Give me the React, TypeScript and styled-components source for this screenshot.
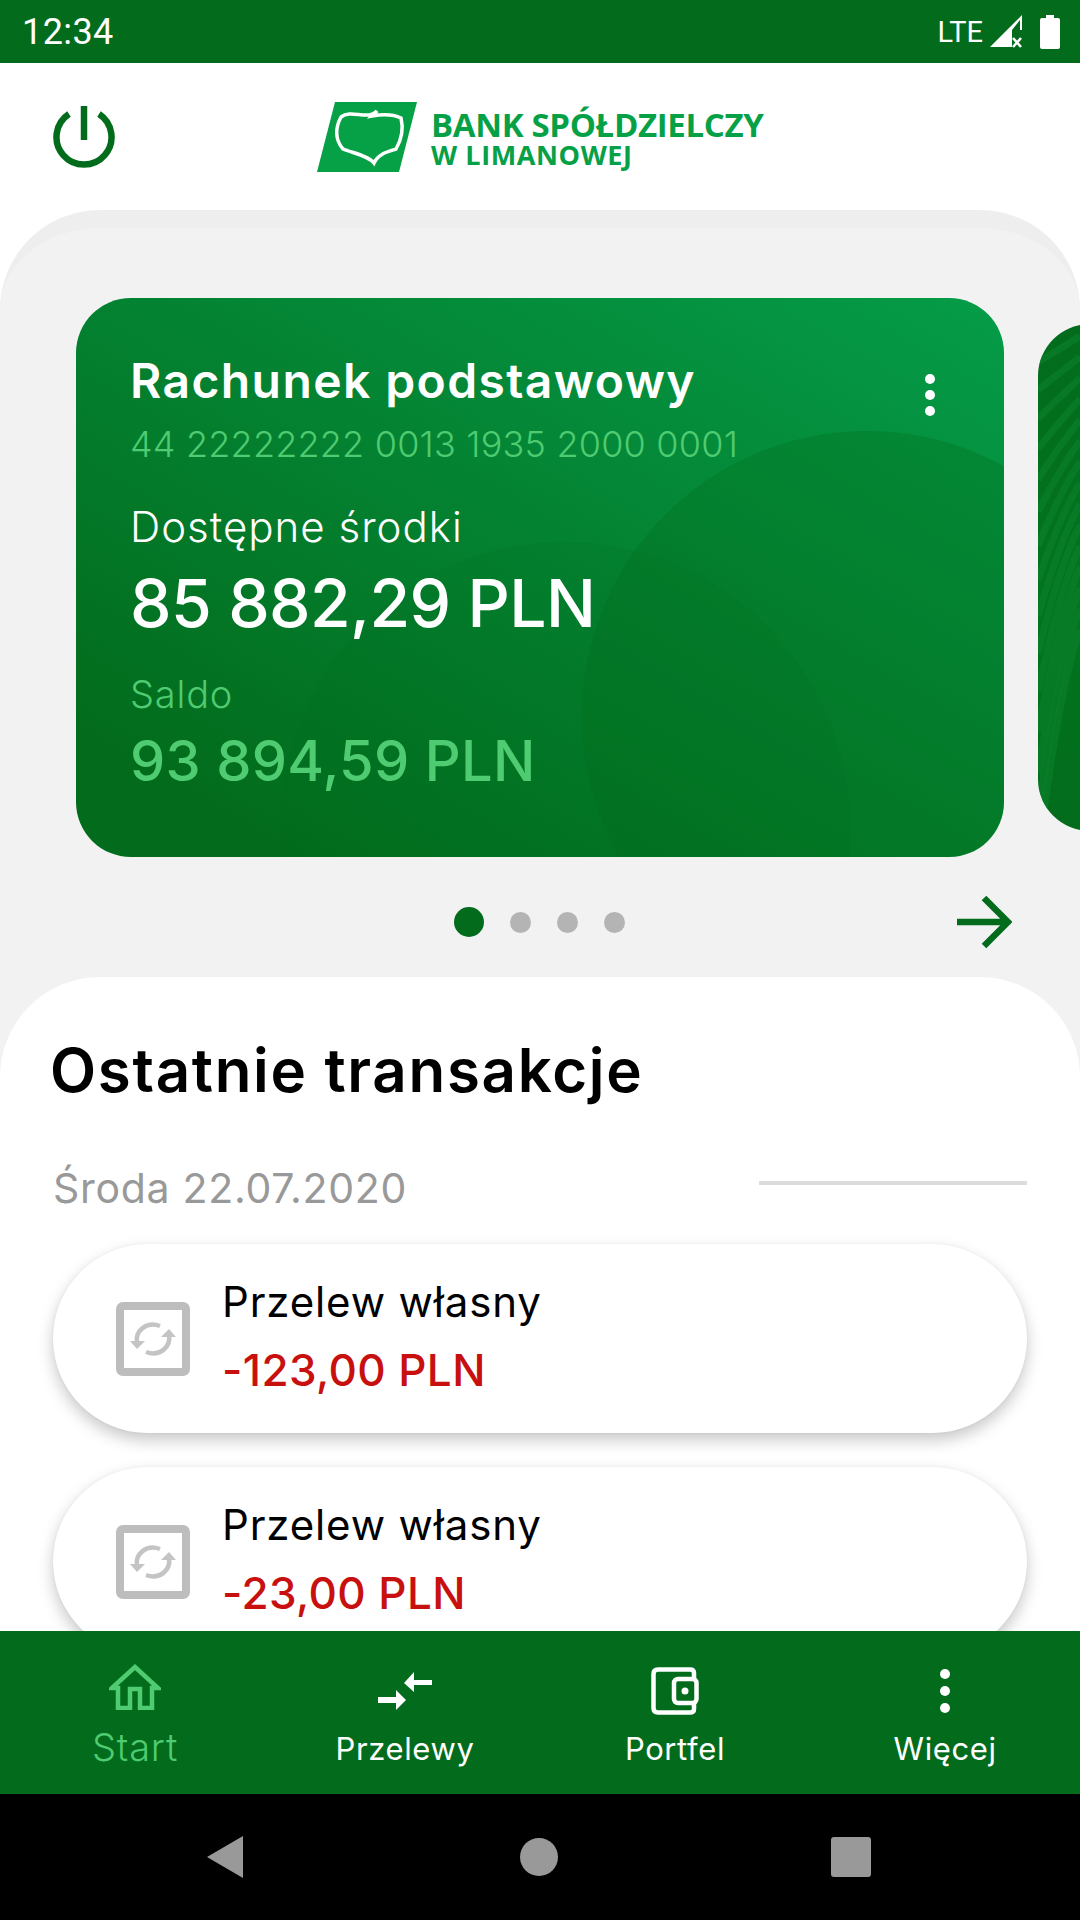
import React from "react";
import styled, { createGlobalStyle } from "styled-components";

const GlobalStyle = createGlobalStyle`
  html, body { margin: 0; padding: 0; background: #000; }
  * { box-sizing: border-box; }
`;

const GREEN = "#026c1c";
const LIGHT = "#4fcb71";
const FONT = `"Inter", "Noto Sans", sans-serif`;

const transactions = [
  { id: 1, title: "Przelew własny", amount: "-123,00 PLN" },
  { id: 2, title: "Przelew własny", amount: "-23,00 PLN" },
];

const PowerIcon = () => (
  <svg width="62" height="62" viewBox="0 0 62 62" fill="none" stroke={GREEN} strokeWidth="6.5">
    <path d="M16 8 A27.5 27.5 0 1 0 46 8" />
    <path d="M31 0 V34" />
  </svg>
);

const BankLogo = () => (
  <svg width="100" height="70" viewBox="0 0 100 70">
    <path d="M18 0 H100 L82 70 H0 Z" fill="#06a146" />
    <path
      d="M24 15 C32 9 42 14 52 13 C56 13 58 11 60 9 C58 12 56 13 55 14 C66 12 76 12 84 16 C87 28 83 40 79 47 C70 50 61 52 57 61 C52 54 36 51 26 47 C18 38 18 26 24 15 Z"
      fill="none"
      stroke="#fff"
      strokeWidth="3.5"
    />
  </svg>
);

const SignalIcon = () => (
  <svg width="36" height="36" viewBox="0 0 36 36">
    <path d="M1 33 L33 1 V16 H23 V33 Z" fill="#fff" />
    <path d="M23 16 L31 6 V16 Z" fill={GREEN} />
    <path d="M24 24 L32 33 M32 24 L24 33" stroke="#fff" strokeWidth="2.6" />
  </svg>
);

const BatteryIcon = () => (
  <svg width="20" height="34" viewBox="0 0 20 34">
    <path d="M6 0 H14 V3 H18 Q20 3 20 5 V32 Q20 34 18 34 H2 Q0 34 0 32 V5 Q0 3 2 3 H6 Z" fill="#fff" />
  </svg>
);

const TransferTypeIcon = () => (
  <svg width="74" height="74" viewBox="0 0 74 74" fill="none">
    <rect x="4" y="4" width="66" height="66" rx="3" stroke="#bdbdbd" strokeWidth="8" />
    <path d="M21 41 C19 29 30 19 44 24" stroke="#c4c4c4" strokeWidth="4.5" />
    <path d="M53 33 C55 45 44 55 30 50" stroke="#c4c4c4" strokeWidth="4.5" />
    <path d="M14 39 H29 L21 47 Z M60 35 H45 L53 27 Z" fill="#c4c4c4" />
  </svg>
);

const HomeIcon = () => (
  <svg width="52" height="46" viewBox="0 0 52 46" fill="none" stroke={LIGHT} strokeWidth="4.5">
    <path d="M3 24 L26 3 L49 24 H43 V44 H31 V25 H21 V44 H9 V24 Z" />
  </svg>
);

const TransfersIcon = () => (
  <svg width="54" height="38" viewBox="0 0 54 38" fill="#fff">
    <path d="M54 13 H36 V20 L26 11 L36 0 V8 H54 Z" />
    <path d="M0 25 H18 V18 L28 28 L18 38 V31 H0 Z" />
  </svg>
);

const WalletIcon = () => (
  <svg width="48" height="48" viewBox="0 0 48 48" fill="none" stroke="#fff" strokeWidth="4.5">
    <path d="M43 12 V6 Q43 2.5 39 2.5 H7 Q2.5 2.5 2.5 7 V41 Q2.5 45.5 7 45.5 H39 Q43 45.5 43 42 V36" />
    <rect x="23" y="12" width="22.5" height="24" rx="4" />
    <circle cx="34" cy="24" r="3.5" fill="#fff" stroke="none" />
  </svg>
);

const DotsIcon = ({ size = 10, gap = 7 }: { size?: number; gap?: number }) => (
  <DotsColumn $gap={gap}>
    <Dot $size={size} />
    <Dot $size={size} />
    <Dot $size={size} />
  </DotsColumn>
);

const stripes = Array.from({ length: 15 }, (_, i) => i);

const StripePattern = () => (
  <svg width="42" height="507" viewBox="0 0 42 507" fill="none" stroke="#0b7f2b" strokeWidth="7" strokeOpacity="0.65">
    {stripes.map((i) => (
      <path key={i} d={`M0 ${38 + i * 27 + i * i * 0.6} Q21 ${26 + i * 24} 42 ${12 + i * 21}`} />
    ))}
  </svg>
);

export default function App() {
  return (
    <>
      <GlobalStyle />
      <Screen>
        <StatusBar>
          <Clock>12:34</Clock>
          <StatusIcons>
            <Lte>LTE</Lte>
            <SignalIcon />
            <BatteryIcon />
          </StatusIcons>
        </StatusBar>

        <Header>
          <PowerButton>
            <PowerIcon />
          </PowerButton>
          <Logo>
            <BankLogo />
            <LogoText>
              <LogoName>BANK SPÓŁDZIELCZY</LogoName>
              <LogoPlace>W LIMANOWEJ</LogoPlace>
            </LogoText>
          </Logo>
        </Header>

        <Main>
          <AccountsPanel>
            <Carousel>
              <AccountCard>
                <CircleTop />
                <CircleBottom />
                <CardMenu>
                  <DotsIcon size={10} gap={6} />
                </CardMenu>
                <AccountName>Rachunek podstawowy</AccountName>
                <AccountNumber>44 22222222 0013 1935 2000 0001</AccountNumber>
                <AvailableLabel>Dostępne środki</AvailableLabel>
                <AvailableValue>85 882,29 PLN</AvailableValue>
                <BalanceLabel>Saldo</BalanceLabel>
                <BalanceValue>93 894,59 PLN</BalanceValue>
              </AccountCard>
              <NextCard>
                <StripePattern />
              </NextCard>
            </Carousel>
            <Pager>
              <PagerDots>
                <PagerDot $active />
                <PagerDot />
                <PagerDot />
                <PagerDot />
              </PagerDots>
              <PagerArrow>
                <svg width="58" height="54" viewBox="0 0 58 54" fill="none" stroke={GREEN} strokeWidth="6.5">
                  <path d="M3 27 H54 M30 3 L54 27 L30 51" />
                </svg>
              </PagerArrow>
            </Pager>
          </AccountsPanel>

          <TransactionsPanel>
            <SectionTitle>Ostatnie transakcje</SectionTitle>
            <DateRow>
              <DateLabel>Środa 22.07.2020</DateLabel>
              <DateLine />
            </DateRow>
            <TransactionList>
              {transactions.map((t) => (
                <TransactionCard key={t.id}>
                  <TransferTypeIcon />
                  <TransactionBody>
                    <TransactionTitle>{t.title}</TransactionTitle>
                    <TransactionAmount>{t.amount}</TransactionAmount>
                  </TransactionBody>
                </TransactionCard>
              ))}
            </TransactionList>
          </TransactionsPanel>
        </Main>

        <BottomNav>
          <NavItem $active>
            <NavIcon><HomeIcon /></NavIcon>
            <NavLabel $active>Start</NavLabel>
          </NavItem>
          <NavItem>
            <NavIcon><TransfersIcon /></NavIcon>
            <NavLabel>Przelewy</NavLabel>
          </NavItem>
          <NavItem>
            <NavIcon><WalletIcon /></NavIcon>
            <NavLabel>Portfel</NavLabel>
          </NavItem>
          <NavItem>
            <NavIcon><DotsIcon size={10} gap={7} /></NavIcon>
            <NavLabel>Więcej</NavLabel>
          </NavItem>
        </BottomNav>

        <SystemBar>
          <BackButton />
          <HomeButton />
          <RecentButton />
        </SystemBar>
      </Screen>
    </>
  );
}

const Screen = styled.div`
  width: 1080px;
  height: 1920px;
  display: flex;
  flex-direction: column;
  overflow: hidden;
  background: #fff;
  font-family: ${FONT};
`;

const StatusBar = styled.div`
  flex: 0 0 63px;
  background: ${GREEN};
  display: flex;
  align-items: center;
  justify-content: space-between;
  padding: 0 20px 0 22px;
  color: #fff;
  font-family: "Roboto", sans-serif;
`;

const Clock = styled.span`
  font-size: 36px;
  letter-spacing: 0.4px;
`;

const StatusIcons = styled.div`
  display: flex;
  align-items: center;
  gap: 6px;

  svg:last-child {
    margin-left: 9px;
  }
`;

const Lte = styled.span`
  font-size: 29px;
`;

const Header = styled.div`
  flex: 0 0 147px;
  display: flex;
  align-items: center;
  padding-left: 53px;
`;

const PowerButton = styled.div`
  display: flex;
  margin-right: 202px;
`;

const Logo = styled.div`
  display: flex;
  align-items: center;
  gap: 14px;
`;

const LogoText = styled.div`
  display: flex;
  flex-direction: column;
  padding-top: 4px;
  color: #06a146;
  font-family: "Open Sans", sans-serif;
  font-weight: 700;
`;

const LogoName = styled.span`
  font-size: 33px;
  line-height: 33px;
  letter-spacing: -0.35px;
`;

const LogoPlace = styled.span`
  font-size: 27px;
  line-height: 28px;
  letter-spacing: 0.6px;
`;

const Main = styled.div`
  flex: 1;
  min-height: 0;
  overflow: hidden;
  display: flex;
  flex-direction: column;
`;

const AccountsPanel = styled.div`
  background: #f2f2f2;
  border-top: 18px solid #eeeeee;
  border-radius: 100px 100px 0 0;
  padding: 70px 0 128px;
  margin-bottom: -100px;
`;

const Carousel = styled.div`
  display: flex;
  align-items: center;
  gap: 34px;
  padding-left: 76px;
  overflow: hidden;
`;

const AccountCard = styled.div`
  position: relative;
  flex: 0 0 928px;
  height: 559px;
  padding: 55px 54px;
  overflow: hidden;
  border-radius: 55px;
  background: linear-gradient(210deg, #059c48 0%, #048a39 32%, #026c1c 88%);
  color: #fff;
`;

const CircleTop = styled.div`
  position: absolute;
  left: 506px;
  top: 133px;
  width: 570px;
  height: 570px;
  border-radius: 50%;
  background: rgba(2, 108, 28, 0.3);
`;

const CircleBottom = styled.div`
  position: absolute;
  left: 204px;
  top: 244px;
  width: 570px;
  height: 570px;
  border-radius: 50%;
  background: rgba(2, 108, 28, 0.14);
`;

const CardMenu = styled.div`
  position: absolute;
  top: 76px;
  right: 69px;
`;

const DotsColumn = styled.div<{ $gap: number }>`
  display: flex;
  flex-direction: column;
  gap: ${(p) => p.$gap}px;
`;

const Dot = styled.span<{ $size: number }>`
  display: block;
  width: ${(p) => p.$size}px;
  height: ${(p) => p.$size}px;
  border-radius: 50%;
  background: #fff;
`;

const CardText = styled.div`
  position: relative;
  white-space: nowrap;
`;

const AccountName = styled(CardText)`
  font-size: 48px;
  font-weight: 600;
  line-height: 56px;
  letter-spacing: 1.4px;
`;

const AccountNumber = styled(CardText)`
  margin-top: 13px;
  font-size: 36px;
  font-weight: 300;
  line-height: 44px;
  letter-spacing: 0.2px;
  color: ${LIGHT};
`;

const AvailableLabel = styled(CardText)`
  margin-top: 36px;
  font-size: 42px;
  font-weight: 300;
  line-height: 50px;
  letter-spacing: 1px;
`;

const AvailableValue = styled(CardText)`
  margin-top: 13px;
  font-size: 66px;
  font-weight: 500;
  line-height: 76px;
  letter-spacing: -0.6px;
`;

const BalanceLabel = styled(CardText)`
  margin-top: 31px;
  font-size: 38px;
  font-weight: 300;
  line-height: 44px;
  letter-spacing: 0.8px;
  color: ${LIGHT};
`;

const BalanceValue = styled(CardText)`
  margin-top: 12px;
  font-size: 56px;
  font-weight: 500;
  line-height: 66px;
  letter-spacing: 0.3px;
  color: ${LIGHT};
`;

const NextCard = styled.div`
  flex: 0 0 928px;
  height: 507px;
  overflow: hidden;
  border-radius: 52px;
  background: linear-gradient(180deg, #026c1c, #03741f 55%, #026c1c);
`;

const Pager = styled.div`
  position: relative;
  height: 54px;
  margin-top: 38px;
  display: flex;
  justify-content: center;
  align-items: center;
`;

const PagerDots = styled.div`
  display: flex;
  align-items: center;
  gap: 26px;
  margin-left: -2px;
`;

const PagerDot = styled.span<{ $active?: boolean }>`
  display: block;
  width: ${(p) => (p.$active ? 30 : 21)}px;
  height: ${(p) => (p.$active ? 30 : 21)}px;
  border-radius: 50%;
  background: ${(p) => (p.$active ? GREEN : "#b4b4b4")};
`;

const PagerArrow = styled.div`
  position: absolute;
  right: 68px;
  top: 0;
  display: flex;
`;

const TransactionsPanel = styled.div`
  position: relative;
  flex: 1;
  background: #fff;
  border-radius: 100px 100px 0 0;
  padding: 59px 53px 0;
`;

const SectionTitle = styled.h2`
  margin: 0 0 0 -3px;
  font-size: 60px;
  font-weight: 600;
  line-height: 68px;
  letter-spacing: 1.7px;
  color: #000;
`;

const DateRow = styled.div`
  display: flex;
  align-items: center;
  justify-content: space-between;
  margin-top: 59px;
`;

const DateLabel = styled.span`
  font-size: 41px;
  font-weight: 400;
  line-height: 50px;
  letter-spacing: 0.7px;
  color: #999;
`;

const DateLine = styled.span`
  width: 268px;
  height: 4px;
  margin-bottom: 10px;
  background: #dcdcdc;
`;

const TransactionList = styled.div`
  display: flex;
  flex-direction: column;
  gap: 34px;
  margin-top: 31px;
`;

const TransactionCard = styled.div`
  flex: 0 0 189px;
  display: flex;
  align-items: center;
  gap: 32px;
  padding-left: 63px;
  border-radius: 95px;
  background: #fff;
  box-shadow: 0 7px 16px rgba(0, 0, 0, 0.22), 0 0 3px rgba(0, 0, 0, 0.05);
`;

const TransactionBody = styled.div`
  display: flex;
  flex-direction: column;
  gap: 18px;
  margin-top: -5px;
`;

const TransactionTitle = styled.span`
  font-size: 42px;
  font-weight: 400;
  line-height: 50px;
  letter-spacing: 0.85px;
  color: #000;
`;

const TransactionAmount = styled.span`
  font-size: 44px;
  font-weight: 500;
  line-height: 50px;
  letter-spacing: 0.4px;
  color: #c8100f;
`;

const BottomNav = styled.div`
  position: relative;
  flex: 0 0 163px;
  display: grid;
  grid-template-columns: repeat(4, 1fr);
  background: ${GREEN};
`;

const NavItem = styled.div<{ $active?: boolean }>`
  display: flex;
  flex-direction: column;
  align-items: center;
  padding-top: ${(p) => (p.$active ? 33 : 37)}px;
`;

const NavIcon = styled.div`
  height: 46px;
  display: flex;
  align-items: center;
`;

const NavLabel = styled.span<{ $active?: boolean }>`
  margin-top: ${(p) => (p.$active ? 18 : 16)}px;
  font-size: ${(p) => (p.$active ? 38 : 31)}px;
  font-weight: ${(p) => (p.$active ? 300 : 400)};
  line-height: 38px;
  letter-spacing: ${(p) => (p.$active ? 0.8 : 0.6)}px;
  color: ${(p) => (p.$active ? LIGHT : "#fff")};
`;

const SystemBar = styled.div`
  flex: 0 0 126px;
  background: #000;
  display: grid;
  grid-template-columns: 225px 1fr 225px;
  align-items: center;
  justify-items: center;
  padding: 0 209px 0 207px;
`;

const BackButton = styled.span`
  justify-self: start;
  width: 36px;
  height: 42px;
  background: #999;
  clip-path: polygon(100% 0, 100% 100%, 0 50%);
`;

const HomeButton = styled.span`
  width: 38px;
  height: 38px;
  border-radius: 50%;
  background: #999;
`;

const RecentButton = styled.span`
  justify-self: end;
  width: 40px;
  height: 40px;
  border-radius: 3px;
  background: #999;
`;
